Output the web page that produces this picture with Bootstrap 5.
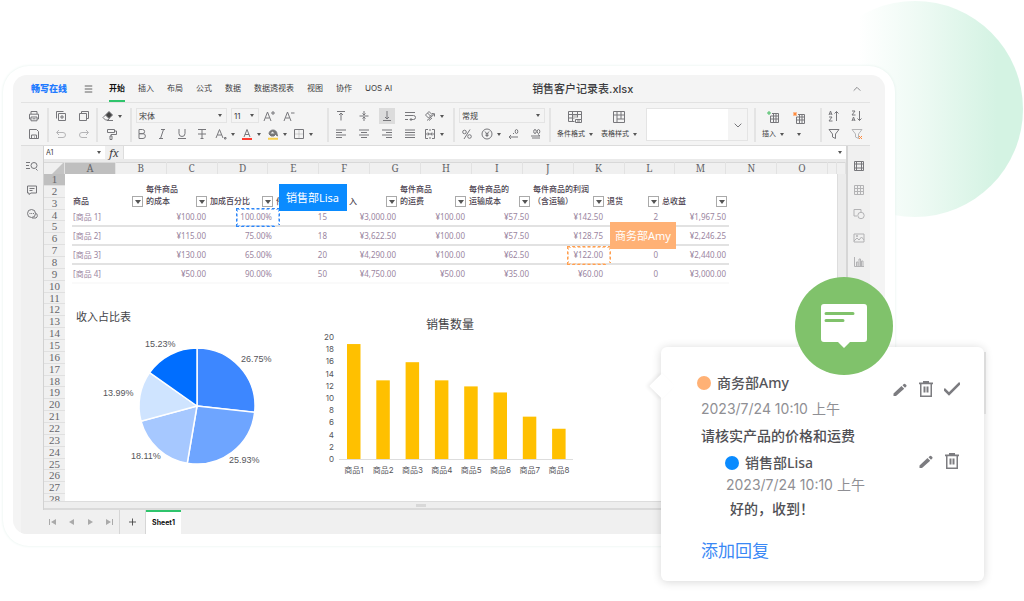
<!DOCTYPE html>
<html lang="zh-CN">
<head>
<meta charset="utf-8">
<meta name="viewport" content="width=device-width, initial-scale=1">
<title>销售客户记录表.xlsx</title>
<link href="https://cdn.jsdelivr.net/npm/bootstrap@5.3.0/dist/css/bootstrap.min.css" rel="stylesheet">
<style>
body{font-family:"Inter","Noto Sans CJK SC",sans-serif;font-size:8px;line-height:12px;color:#3c3c40;background:#fff;overflow-x:hidden}
button,input,select{font:inherit;color:inherit;border:0;padding:0;background:none;border-radius:0;appearance:none}
svg{display:block;flex:none}
.ic{fill:none;stroke:#77777b;stroke-width:1;width:12px;height:12px}
.glow{position:absolute;top:1px;right:1px;width:216px;height:216px;border-radius:50%;background:linear-gradient(90deg,#fff 24%,#eefaf4 52%,#d4f3e3 88%)}
.stage{padding:66px 129px 0 3px;min-height:600px}
.device{background:#fff;border-radius:26px;padding:9px 10px 12px;box-shadow:0 0 3px #e2f0eb}
.screen{background:#f4f4f4;border-radius:14px;padding:0 15px 0 8px;overflow:hidden}
.menubar{height:28px;border-bottom:1px solid #e2e2e2;padding-left:10px}
.brand{font-size:9px;font-weight:900;color:#1f7bff;width:53px;text-decoration:none}
.menu-link{color:#3c3c40;text-decoration:none;margin-right:13px;line-height:27px;white-space:nowrap}
.menu-link.active{font-weight:700;color:#111;box-shadow:inset 0 -2px #2fc46c}
.doc-title{font-size:11px;font-weight:500;margin-left:140px;line-height:16px}
.ribbon{height:43px;padding:5px 0 2px;border-bottom:1px solid #dcdcdc}
.grp{border-right:2px solid #e4e4e4;height:34px}
.grp:last-child{border:0}
.grp>.line{height:18px}
.cap{font-size:7px}
.tb{display:flex;align-items:center;justify-content:center;gap:4px;height:16px}
.w-s{width:20px}.w-m{width:23px}.w-l{width:26px}
.caret{width:0;height:0;border:2px solid transparent;border-top:3px solid #555;border-bottom:0;flex:none}
.on{background:#dcdcdc;width:16px;margin:0 3px 0 4px}
.g1{width:28px}.g2{width:49px}.g3{width:34px}.g4{width:197px}.g5{width:126px}.g6{width:96px}.g7,.g8{padding-left:6px}.g8{width:66px}.g9{width:48px}
.pick{position:relative;border:1px solid #e4e4e4;height:15px}
.pick select,.namebox input{width:100%;height:100%;padding-left:2px;outline:0;display:block;line-height:12px}
.pick .caret,.namebox .caret,.fxbar .caret{position:absolute;right:4px;top:5px}
.pick-font{width:91px}.pick-size{width:28px}.pick-num{width:86px}
.stylebox{width:102px;height:33px;border:1px solid #e4e4e4;background:#fff;margin-right:6px}
.stylebox span{width:19px;background:#f4f4f4}
.railbar{width:22px;background:#f0f0f0;flex:none}
.railbar button{height:24px;display:flex;align-items:center;justify-content:center;width:100%}
.book{border-left:1px solid #d2d2d2;border-right:2px solid #d6d6d6;min-width:0}
.fxrow{height:13px;background:#fff}
.namebox{width:61px;position:relative;font-size:7px}
.fxlabel{width:19px;background:#f0f0f0;font:italic 11px/13px "Noto Serif","Liberation Serif",serif;text-align:center;border-right:1px solid #ddd}
.fxbar{position:relative}.fxbar input{width:100%;height:13px;outline:0;display:block}
.heads{display:grid;grid-template-columns:21px repeat(15,1fr) 9px 9px;height:15px;border-top:3px solid #eaeaea;background:#f0f0f0;font:10px/12px "Noto Serif","Liberation Serif",serif;text-align:center;color:#66666a}
.heads>*{border-right:1px solid #e2e2e2;box-shadow:inset 0 1px #d8d8d8}
.heads .sel,.rows .sel{background:#bfbfbf}
.corner{background:linear-gradient(135deg,transparent 62%,#c4c4c4 63%)}
.sheet{height:327px;overflow:hidden;background:#fff}
.rows{width:21px;height:332px;display:grid;grid-template-rows:repeat(28,minmax(0,1fr));background:#f0f0f0;font:11px/11px "Liberation Serif",serif;text-align:center;color:#66666a;flex:none}
.rows>*{box-shadow:inset 0 -1px #e0e0e0}
.vscroll{width:9px;border-left:1px solid #ddd;background:#ececec;flex:none}
.hscroll{height:9px;background:#eee;border-top:1px solid #ddd;border-bottom:2px solid #dadada}
.hscroll i{width:10px;height:3px;background:#d8d8d8}
.sales{width:657px;table-layout:fixed;margin:9px 0 0 7px;border-collapse:separate;border-spacing:0;font-family:"Noto Sans","Noto Sans CJK SC",sans-serif}
.sales th{height:25px;padding:0 2px 1px 1px;font-weight:500;line-height:12px;color:#4c3f4f;vertical-align:bottom}
.sales th>div{display:flex;justify-content:space-between;align-items:flex-end;white-space:nowrap}
.sales td{position:relative;height:19px;padding:0 3px 0 1px;text-align:right;color:#9b869f;line-height:17px;border-bottom:2px solid #e2e2e2;white-space:nowrap}
.sales td:first-child{text-align:left}
.sales tr:last-child td{border-bottom-color:#fafafa}
.sales th:nth-child(5) span{padding-left:18px}
.flt{width:11px;height:11px;border:1px solid #aaa;background:#fff;flex:none;display:flex;align-items:center;justify-content:center}
.flt::after{content:"";border:3px solid transparent;border-top:4px solid #555;border-bottom:0}
.mark-box{position:absolute;right:-5px;top:0;bottom:-2px;width:44px;border:1px dashed #2f86f5;outline:1px dashed #8fc0ff;outline-offset:-2px}
.amy-box{border-color:#ff9f50;outline-color:#ffc99b}
.tag{position:absolute;z-index:2;left:100%;color:#fff;font-size:11px;line-height:27px;background:#0a8bff;font-family:"Noto Sans","Noto Sans CJK SC",sans-serif}
.tag-lisa{bottom:14px;margin-left:4px;padding:0 8px 0 7px}
.tag-amy{bottom:14px;margin-left:4px;padding:0 5px;background:#ffb175}
.charts{margin-top:16px}
.charts text{font-family:"Inter","Noto Sans CJK SC",sans-serif;fill:#55555a;font-size:8px}
.charts .ttl{font-size:11px;fill:#444448}
.charts .ttl-bar{font-size:12px}
.charts .pct text{font:9px "Liberation Sans",sans-serif}
.tabs{height:24px;background:#f0f0f0;margin:0 -15px 0 0;padding-left:22px}
.tabs .nav-b{width:19px}
.tabs .plus{width:27px;height:100%;border-left:1px solid #d6d6d6;border-right:1px solid #d6d6d6;display:flex;align-items:center;justify-content:center}
.sheet-tab{width:35px;height:24px;background:#fff;border-top:2px solid #2fc46c;font-weight:700;font-size:7px;color:#111}
.note{position:absolute;z-index:5;top:347px;right:40px;width:323px;background:#fff;border-radius:6px;padding:25px 24px 17px 40px;box-shadow:0 1px 10px rgba(0,0,0,.16);color:#55555a;font-size:14px;line-height:22px}
.note::before{content:"";position:absolute;left:-8px;top:30px;width:18px;height:18px;background:#fff;transform:rotate(45deg);box-shadow:-2px 2px 4px rgba(0,0,0,.07)}
.note::after{content:"";position:absolute;right:-2px;top:5px;width:2px;height:62px;background:#dcdcdc}
.note .who{font-weight:500;font-family:"Noto Sans","Noto Sans CJK SC",sans-serif}
.note .when{color:#8f8f94}
.note .body-t{font-weight:500;line-height:32px;color:#505055}
.dot{width:14px;height:14px;border-radius:50%;background:#ffb175;margin:4px 6px 0 -4px}
.dot.blue{background:#0a8bff;margin-left:-1px}
.reply{padding-left:25px}
.reply .body-t{line-height:26px}
.note a{font-size:17px;line-height:26px;color:#3a88f5;text-decoration:none;display:inline-block;margin-top:16px}
.tools{gap:10px}
.tools svg{width:16px;height:18px;fill:#7c7c80}
.badge-c{position:absolute;z-index:6;top:277px;right:131px;width:98px;height:98px;border-radius:50%;background:#80c26b}
</style>
</head>
<body>
<svg width="0" height="0" class="position-absolute" aria-hidden="true">
<symbol id="print" viewBox="0 0 12 12"><path d="M3 4V1.5h6V4M3 9H1.5V4.2h9V9H9M3 7h6v3.8H3zM4.5 8.8h3"/></symbol>
<symbol id="save" viewBox="0 0 12 12"><path d="M1.5 1.5h7l2 2v7h-9zM3.5 10.500V7h5v3.500M6 9h1"/></symbol>
<symbol id="addcopy" viewBox="0 0 12 12"><path d="M3.500 3.500h7v7h-7zM1.500 8.500v-7h7M7 5v4M5 7h4"/></symbol>
<symbol id="copy" viewBox="0 0 12 12"><path d="M1.500 3.500h7v7h-7zM3.500 3V1.500h7v7H9"/></symbol>
<symbol id="undo" viewBox="0 0 12 12"><path d="M4 2 1.500 4.500 4 7M2 4.500h6a2.500 2.500 0 0 1 0 5H3"/></symbol>
<symbol id="redo" viewBox="0 0 12 12"><path d="M8 2l2.500 2.500L8 7M10 4.500H4a2.500 2.500 0 0 0 0 5h5"/></symbol>
<symbol id="eraser" viewBox="0 0 12 12"><path d="M7 1.500 10.500 5 7 8.500 3.500 5z" fill="#444"/><path d="M3.500 5 1 7.500 3.500 10H6l1.500-1.500M5 10.500h6"/></symbol>
<symbol id="paint" viewBox="0 0 12 12"><path d="M1.500 1.500h7v3h-7zM8.500 3h2v3.500H5V8M4 8h2v3.500H4z"/></symbol>
<symbol id="bold" viewBox="0 0 12 12"><path d="M3 1.500h3.500a2 2 0 0 1 0 4.200H3zM3 5.700h4a2.300 2.300 0 0 1 0 4.800H3z"/></symbol>
<symbol id="ital" viewBox="0 0 12 12"><path d="M5 1.500h4M3 10.500h4M7.500 1.500l-3 9"/></symbol>
<symbol id="under" viewBox="0 0 12 12"><path d="M3 1v4.500a3 3 0 0 0 6 0V1M2 10.500h8"/></symbol>
<symbol id="strike" viewBox="0 0 12 12"><path d="M2 1.500h8M6 1.500v9M2 6h8M4.500 10.500h3"/></symbol>
<symbol id="border" viewBox="0 0 12 12"><path d="M1.500 1.500h9v9h-9z"/><path d="M6 2v8M2 6h8" stroke-opacity=".3"/></symbol>
<symbol id="fill" viewBox="0 0 12 12"><path d="M2 6c0-2.500 2-4 4-4s4 1.500 4 4l.5 2-2-1.500L7 8H4z" fill="#777"/><path d="M3.500 5.500h4L5.500 3.500z" fill="#eee" stroke="none"/><path d="M1 10.800h10" stroke="#fad04c" stroke-width="2"/></symbol>
<symbol id="vt" viewBox="0 0 12 12"><path d="M2 1.500h8M6 10.500V3M4 5l2-2 2 2"/></symbol>
<symbol id="vm" viewBox="0 0 12 12"><path d="M1.500 6h9M6 1v4M6 11V7M4.500 3.500 6 5l1.500-1.500M4.500 8.500 6 7l1.500 1.500"/></symbol>
<symbol id="vb" viewBox="0 0 12 12"><path d="M2 10.500h8M6 1v8M4 7l2 2 2-2"/></symbol>
<symbol id="wrap" viewBox="0 0 12 12"><path d="M1 2.500h10M1 5.500h8.500a2 2 0 0 1 0 4H6M7.500 8 6 9.500 7.500 11M1 9.500h3"/></symbol>
<symbol id="rot" viewBox="0 0 12 12"><path d="M1.500 5 5 1.500 8 4.500 4.500 8zM3.500 3l3 3M3 10.500 10.500 4M8 3.500l2.500.3v2.700M5 10.500 8 8"/></symbol>
<symbol id="al" viewBox="0 0 12 12"><path d="M1 2h10M1 4.500h6M1 7h10M1 9.500h6"/></symbol>
<symbol id="ac" viewBox="0 0 12 12"><path d="M1 2h10M3 4.500h6M1 7h10M3 9.500h6"/></symbol>
<symbol id="ar" viewBox="0 0 12 12"><path d="M1 2h10M5 4.500h6M1 7h10M5 9.500h6"/></symbol>
<symbol id="aj" viewBox="0 0 12 12"><path d="M1 2h10M1 4.500h10M1 7h10M1 9.500h10"/></symbol>
<symbol id="merge" viewBox="0 0 12 12"><path d="M4 1.500H1.500v9H4M8 1.500h2.500v9H8M6 1v2M6 9v2M2 6h8M4 4.500 5 6 4 7.500M8 4.500 7 6l1 1.500"/></symbol>
<symbol id="yen" viewBox="0 0 12 12"><circle cx="6" cy="6" r="5"/><path d="M4 3.500 6 6l2-2.500M6 6v3M4.500 6h3M4.500 7.500h3"/></symbol>
<symbol id="sheetgrid" viewBox="0 0 12 12"><path d="M1.500 1.500h9v9h-9zM1.500 4.500h9M1.500 7.500h9M4.500 1.500v9M7.500 1.500v9"/></symbol>
<symbol id="cond" viewBox="0 0 16 14"><path d="M1.500 1.500h13v8M1.500 1.500v10h6M1.500 4.500h13M1.500 8h6M5.500 1.500v10M10.500 1.500v6"/><path d="M6 5h4v3H6z" fill="#ccc" stroke="none"/><path d="M8.500 9.500h6v3h-6zM10 11h3"/></symbol>
<symbol id="tstyle" viewBox="0 0 14 14"><path d="M1.500 1.500h11v11h-11zM1.500 5h11M5 1.500v11M9 1.500v7.500M5 9h7"/></symbol>
<symbol id="gplus" viewBox="0 0 14 14"><path d="M6 3.500h6.500v9h-8V6M4.500 9h8M4.500 6h8M7.500 3.500v9M10 3.500v9"/><path d="M1 3h4M3 1v4" stroke="#46bd62"/></symbol>
<symbol id="gdel" viewBox="0 0 14 14"><path d="M6 3.500h6.500v9h-8V6M4.500 9h8M4.500 6h8M7.500 3.500v9M10 3.500v9"/><path d="M1.500 1.500l3 3M4.500 1.500l-3 3" stroke="#ff8a3c" stroke-width="1.500"/></symbol>
<symbol id="funnel" viewBox="0 0 12 12"><path d="M1 1.500h10L7.500 6v4.500L4.500 9V6z"/></symbol>
<symbol id="up" viewBox="0 0 12 12"><path d="M1 5 2.500 1 4 5M1.500 4h2M1 7h3L1 11h3.500M8.500 11V1.500M6.500 3.500l2-2 2 2"/></symbol>
<symbol id="down" viewBox="0 0 12 12"><path d="M1 1h3L1 5h3.500M1 11l1.500-4L4 11M1.500 10h2M8.500 1v9.500M6.500 8.500l2 2 2-2"/></symbol>
<symbol id="find" viewBox="0 0 12 12"><path d="M0 2.500h4M0 5.500h3M0 8.500h4M10 9l1.500 1.500"/><circle cx="8" cy="5.500" r="3"/></symbol>
<symbol id="note" viewBox="0 0 12 12"><path d="M1.500 2h9v7H5l-2 1.500V9H1.500zM3.500 4.500h5M3.500 6.500h3"/></symbol>
<symbol id="chat" viewBox="0 0 12 12"><circle cx="5.500" cy="5.500" r="4"/><path d="M9.500 5a2.800 2.800 0 0 1 .5 5H6M3.500 5.500h1M5.200 5.500h1M7 5.500h1"/></symbol>
<symbol id="panel" viewBox="0 0 12 12"><path d="M1.500 1.500h9v9h-9zM3.500 1.500v9M8.500 1.500v9M1.500 4h9M1.500 8h9"/></symbol>
<symbol id="shape" viewBox="0 0 12 12"><path d="M4 8H1V1.500h7V4"/><circle cx="8" cy="7.500" r="3.200"/></symbol>
<symbol id="pic" viewBox="0 0 12 12"><path d="M1 2h10v8H1zM1 9l3-3 2 2 2.500-3L11 8"/><circle cx="4" cy="4" r=".7"/></symbol>
<symbol id="chart" viewBox="0 0 12 12"><path d="M1.500 1v9.500H11M3.500 10V6h1.500v4M6 10V3h1.500v7M8.500 10V5H10v5"/></symbol>
<symbol id="pencil" viewBox="0 0 16 18"><path d="M1.500 16v-2.500L9.500 6l2.700 2.700L4 16zM10.500 5.200l1.400-1.300q.6-.5 1.200 0l1.200 1.200q.6.600 0 1.300L13 7.800z"/></symbol>
<symbol id="trash" viewBox="0 0 16 18"><path fill-rule="evenodd" d="M5 2.500V1h6v1.500h4v1.700h-1V17H2V4.200H1V2.500zM3.500 4.200v11.300h9V4.200zM5.500 6.500h2v6h-2zm3 0h2v6h-2z"/></symbol>
</svg>

<div class="position-relative">
<div class="glow"></div>
<div class="stage position-relative">
<main class="device">
<div class="screen">
  <header class="menubar d-flex align-items-center">
    <a href="#" class="brand">畅写在线</a>
    <button aria-label="菜单" class="me-3"><svg class="ic" viewBox="0 0 12 12" style="width:9px"><path d="M1 2h10M1 6h10M1 10h10" stroke="#333"/></svg></button>
    <nav class="d-flex">
      <a href="#" class="menu-link active">开始</a><a href="#" class="menu-link">插入</a><a href="#" class="menu-link">布局</a><a href="#" class="menu-link">公式</a><a href="#" class="menu-link">数据</a><a href="#" class="menu-link">数据透视表</a><a href="#" class="menu-link">视图</a><a href="#" class="menu-link">协作</a><a href="#" class="menu-link me-0">UOS AI</a>
    </nav>
    <h1 class="doc-title mb-0 me-auto">销售客户记录表.xlsx</h1>
    <button aria-label="收起" class="me-2"><svg class="ic" viewBox="0 0 12 12" style="width:10px"><path d="M2 8l4-4 4 4"/></svg></button>
  </header>

  <div class="ribbon d-flex">
    <div class="grp g1">
      <div class="line d-flex justify-content-center"><button class="tb" aria-label="打印"><svg class="ic"><use href="#print"/></svg></button></div>
      <div class="line d-flex justify-content-center"><button class="tb" aria-label="保存"><svg class="ic"><use href="#save"/></svg></button></div>
    </div>
    <div class="grp g2">
      <div class="line d-flex"><button class="tb w-m" aria-label="粘贴"><svg class="ic"><use href="#addcopy"/></svg></button><button class="tb w-m" aria-label="复制"><svg class="ic"><use href="#copy"/></svg></button></div>
      <div class="line d-flex opacity-50"><button class="tb w-m" aria-label="撤销"><svg class="ic"><use href="#undo"/></svg></button><button class="tb w-m" aria-label="重做"><svg class="ic"><use href="#redo"/></svg></button></div>
    </div>
    <div class="grp g3">
      <div class="line d-flex ps-1"><button class="tb w-s" aria-label="清除"><svg class="ic"><use href="#eraser"/></svg><i class="caret"></i></button></div>
      <div class="line d-flex ps-1"><button class="tb w-s" aria-label="格式刷"><svg class="ic"><use href="#paint"/></svg></button></div>
    </div>
    <div class="grp g4">
      <div class="line d-flex ps-1">
        <div class="pick pick-font me-1"><select aria-label="字体"><option>宋体</option></select><i class="caret"></i></div>
        <div class="pick pick-size"><select aria-label="字号"><option>11</option></select><i class="caret"></i></div>
        <button class="tb w-s" aria-label="增大字号"><svg class="ic"><path d="M1 11 4.500 2 8 11M2.500 8h4M8 3h4M10 1v4"/></svg></button><button class="tb w-s" aria-label="减小字号"><svg class="ic"><path d="M1 11 4.500 2 8 11M2.500 8h4M8 3h3.500"/></svg></button>
      </div>
      <div class="line d-flex"><button class="tb w-s" aria-label="加粗"><svg class="ic"><use href="#bold"/></svg></button><button class="tb w-s" aria-label="斜体"><svg class="ic"><use href="#ital"/></svg></button><button class="tb w-s" aria-label="下划线"><svg class="ic"><use href="#under"/></svg></button><button class="tb w-s" aria-label="删除线"><svg class="ic"><use href="#strike"/></svg></button><button class="tb w-l" aria-label="下标"><svg class="ic"><path d="M1 10 4.500 1.500 8 10M2.500 7h4M9.500 9.500h1.500v1.500H9.500z"/></svg><i class="caret"></i></button><button class="tb w-l" aria-label="字体颜色"><svg class="ic"><path d="M3 9 6 1.500 9 9M4 6.500h4"/><path d="M1 11h10" stroke="#ff3b30" stroke-width="2"/></svg><i class="caret"></i></button><button class="tb w-l" aria-label="填充颜色"><svg class="ic"><use href="#fill"/></svg><i class="caret"></i></button><button class="tb w-l" aria-label="边框"><svg class="ic"><use href="#border"/></svg><i class="caret"></i></button></div>
    </div>
    <div class="grp g5">
      <div class="line d-flex"><button class="tb w-m" aria-label="顶端对齐"><svg class="ic"><use href="#vt"/></svg></button><button class="tb w-m" aria-label="垂直居中"><svg class="ic"><use href="#vm"/></svg></button><button class="tb on" aria-label="底端对齐"><svg class="ic"><use href="#vb"/></svg></button><button class="tb w-m" aria-label="自动换行"><svg class="ic"><use href="#wrap"/></svg></button><button class="tb w-l" aria-label="方向"><svg class="ic"><use href="#rot"/></svg><i class="caret"></i></button></div>
      <div class="line d-flex"><button class="tb w-m" aria-label="左对齐"><svg class="ic"><use href="#al"/></svg></button><button class="tb w-m" aria-label="居中"><svg class="ic"><use href="#ac"/></svg></button><button class="tb w-m" aria-label="右对齐"><svg class="ic"><use href="#ar"/></svg></button><button class="tb w-m" aria-label="两端对齐"><svg class="ic"><use href="#aj"/></svg></button><button class="tb w-l" aria-label="合并"><svg class="ic"><use href="#merge"/></svg><i class="caret"></i></button></div>
    </div>
    <div class="grp g6">
      <div class="line ps-1"><div class="pick pick-num"><select aria-label="数字格式"><option>常规</option></select><i class="caret"></i></div></div>
      <div class="line d-flex"><button class="tb w-m" aria-label="百分比"><svg class="ic"><circle cx="3.500" cy="4" r="1.800"/><circle cx="8.500" cy="8.500" r="1.800"/><path d="M9 1.500 3 11"/></svg></button><button class="tb w-l" aria-label="货币"><svg class="ic"><use href="#yen"/></svg><i class="caret"></i></button><button class="tb w-s" aria-label="减少小数"><svg class="ic"><ellipse cx="8.500" cy="3.500" rx="1.300" ry="2"/><path d="M1 9h9M3 7 1 9l2 2M5 5.500h1"/></svg></button><button class="tb w-m" aria-label="增加小数"><svg class="ic"><ellipse cx="5" cy="3.500" rx="1.300" ry="2"/><ellipse cx="8.500" cy="3.500" rx="1.300" ry="2"/><path d="M1 8h9M8 6.500l2 1.500M2 10h8"/></svg></button></div>
    </div>
    <div class="grp g7 flex-fill d-flex">
      <button class="text-nowrap"><svg class="ic mx-auto" style="width:16px;height:14px"><use href="#cond"/></svg><span class="cap d-flex align-items-center gap-1 mt-1">条件格式 <i class="caret"></i></span></button>
      <button class="text-nowrap ms-2"><svg class="ic mx-auto" style="width:14px;height:14px"><use href="#tstyle"/></svg><span class="cap d-flex align-items-center gap-1 mt-1">表格样式 <i class="caret"></i></span></button>
      <button class="stylebox d-flex justify-content-end ms-auto" aria-label="样式"><span class="h-100 d-flex align-items-center justify-content-center"><svg class="ic" style="width:8px" viewBox="0 0 12 12"><path d="M1 4l5 5 5-5" stroke-width="1.500"/></svg></span></button>
    </div>
    <div class="grp g8 d-flex gap-2">
      <button class="text-nowrap"><svg class="ic mx-auto" style="width:14px;height:14px"><use href="#gplus"/></svg><span class="cap d-flex align-items-center gap-1 mt-1">插入 <i class="caret"></i></span></button>
      <button aria-label="删除"><svg class="ic" style="width:14px;height:14px"><use href="#gdel"/></svg><span class="cap d-flex justify-content-center py-1 mt-1"><i class="caret"></i></span></button>
    </div>
    <div class="grp g9">
      <div class="line d-flex"><button class="tb w-m" aria-label="升序"><svg class="ic"><use href="#up"/></svg></button><button class="tb w-m" aria-label="降序"><svg class="ic"><use href="#down"/></svg></button></div>
      <div class="line d-flex"><button class="tb w-m" aria-label="筛选"><svg class="ic"><use href="#funnel"/></svg></button><button class="tb w-m" aria-label="清除筛选"><svg class="ic"><g opacity=".5"><use href="#funnel"/></g><path d="M8 8l3 3M11 8l-3 3" stroke="#ff8a3c"/></svg></button></div>
    </div>
  </div>

  <div class="d-flex">
    <aside class="railbar pt-2">
      <button aria-label="查找"><svg class="ic"><use href="#find"/></svg></button><button aria-label="批注"><svg class="ic"><use href="#note"/></svg></button><button aria-label="聊天"><svg class="ic"><use href="#chat"/></svg></button>
    </aside>
    <section class="book flex-fill">
      <div class="fxrow d-flex">
        <div class="namebox"><input aria-label="名称框" value="A1"><i class="caret"></i></div>
        <div class="fxlabel">fx</div>
        <div class="fxbar flex-fill"><input aria-label="编辑栏"><i class="caret"></i></div>
      </div>
      <div class="heads" id="heads"></div>
      <div class="sheet d-flex">
        <div class="rows" id="rows"></div>
        <div class="flex-fill">
          <table class="sales">
            <colgroup><col style="width:73px"><col style="width:64px"><col style="width:66px"><col style="width:55px"><col style="width:69px"><col style="width:69px"><col style="width:64px"><col style="width:74px"><col style="width:55px"><col style="width:68px"></colgroup>
            <thead><tr id="thead"></tr></thead>
            <tbody id="tbody"></tbody>
          </table>
          <div class="charts d-flex">
            <svg width="255" height="185" viewBox="65 300 255 185" role="img" aria-label="收入占比表">
              <text class="ttl" x="76" y="321">收入占比表</text>
              <g id="pie" stroke="#fff" stroke-width="1.500"></g>
              <g class="pct"><text x="241" y="362">26.75%</text><text x="229" y="463">25.93%</text><text x="131" y="459">18.11%</text><text x="103" y="396">13.99%</text><text x="145" y="347">15.23%</text></g>
            </svg>
            <svg width="260" height="185" viewBox="320 300 260 185" role="img" aria-label="销售数量">
              <text class="ttl ttl-bar" x="450" y="329" text-anchor="middle">销售数量</text>
              <path d="M339 459.500h234" stroke="#ddd"/>
              <g id="bars"></g>
            </svg>
          </div>
        </div>
        <div class="vscroll"></div>
      </div>
      <div class="hscroll d-flex align-items-center justify-content-center pe-5"><i></i></div>
    </section>
    <aside class="railbar pt-2">
      <button aria-label="面板"><svg class="ic"><use href="#panel"/></svg></button><button aria-label="表格"><svg class="ic opacity-50"><use href="#sheetgrid"/></svg></button><button aria-label="形状"><svg class="ic opacity-50"><use href="#shape"/></svg></button><button aria-label="图片"><svg class="ic opacity-50"><use href="#pic"/></svg></button><button aria-label="图表"><svg class="ic opacity-50"><use href="#chart"/></svg></button>
    </aside>
  </div>

  <footer class="tabs d-flex align-items-center">
    <button class="nav-b" aria-label="第一张"><svg class="mx-auto" width="7" height="6" fill="#aaa"><path d="M0 0h1v6H0zM7 0v6L2 3z"/></svg></button><button class="nav-b" aria-label="上一张"><svg class="mx-auto" width="5" height="6" fill="#aaa"><path d="M5 0v6L0 3z"/></svg></button><button class="nav-b" aria-label="下一张"><svg class="mx-auto" width="5" height="6" fill="#aaa"><path d="M0 0v6l5-3z"/></svg></button><button class="nav-b" aria-label="最后一张"><svg class="mx-auto" width="7" height="6" fill="#aaa"><path d="M6 0h1v6H6zM0 0v6l5-3z"/></svg></button>
    <button class="plus" aria-label="新建工作表"><svg class="ic" style="width:7px" viewBox="0 0 8 8"><path d="M4 0v8M0 4h8" stroke="#444"/></svg></button>
    <button class="sheet-tab">Sheet1</button>
  </footer>
</div>
</main>
</div>

<div class="badge-c d-flex align-items-center justify-content-center">
  <svg width="46" height="44" viewBox="0 0 46 44"><path fill="#fff" d="M3 0h40a3 3 0 0 1 3 3v32a3 3 0 0 1-3 3H29l-6 6-6-6H3a3 3 0 0 1-3-3V3a3 3 0 0 1 3-3z"/><path d="M5 9.500h27M5 16.500h17" stroke="#80c26b" stroke-width="3" stroke-linecap="round"/></svg>
</div>
<section class="note">
  <div class="d-flex align-items-start"><i class="dot"></i><span class="who">商务部Amy</span>
    <div class="tools d-flex ms-auto pt-2"><button aria-label="编辑"><svg><use href="#pencil"/></svg></button><button aria-label="删除"><svg><use href="#trash"/></svg></button><button aria-label="解决"><svg viewBox="0 0 16 18"><path d="M0 9l5 5L16 3" fill="none" stroke="#7c7c80" stroke-width="2.500"/></svg></button></div>
  </div>
  <div class="when">2023/7/24 10:10 上午</div>
  <div class="body-t">请核实产品的价格和运费</div>
  <div class="reply">
    <div class="d-flex align-items-start"><i class="dot blue"></i><span class="who">销售部Lisa</span>
      <div class="tools d-flex ms-auto"><button aria-label="编辑"><svg><use href="#pencil"/></svg></button><button aria-label="删除"><svg><use href="#trash"/></svg></button></div>
    </div>
    <div class="when">2023/7/24 10:10 上午</div>
    <div class="body-t ps-1">好的，收到！</div>
  </div>
  <a href="#">添加回复</a>
</section>
</div>

<script>
const $ = id => document.getElementById(id);
$('heads').innerHTML = '<span class="corner"></span>' + [...'ABCDEFGHIJKLMNO'].map((c, i) => `<span class="${i ? '' : 'sel'}">${c}</span>`).join('') + '<span></span><span></span>';
$('rows').innerHTML = Array.from({length: 28}, (_, i) => `<span class="${i ? '' : 'sel'}">${i + 1}</span>`).join('');
const heads = ['商品', '每件商品<br>的成本', '加成百分比', '件', '入', '每件商品<br>的运费', '每件商品的<br>运输成本', '每件商品的利润<br>（含运输）', '退货', '总收益'];
$('thead').innerHTML = heads.map(h => `<th><div><span>${h}</span><button class="flt" aria-label="筛选"></button></div></th>`).join('');
const data = [
  ['[商品 1]', '¥100.00', '100.00%', '15', '¥3,000.00', '¥100.00', '¥57.50', '¥142.50', '2', '¥1,967.50'],
  ['[商品 2]', '¥115.00', '75.00%', '18', '¥3,622.50', '¥100.00', '¥57.50', '¥128.75', '', '¥2,246.25'],
  ['[商品 3]', '¥130.00', '65.00%', '20', '¥4,290.00', '¥100.00', '¥62.50', '¥122.00', '0', '¥2,440.00'],
  ['[商品 4]', '¥50.00', '90.00%', '50', '¥4,750.00', '¥50.00', '¥35.00', '¥60.00', '0', '¥3,000.00']];
const extra = {'0,2': '<i class="mark-box"></i><span class="tag tag-lisa">销售部Lisa</span>', '2,7': '<i class="mark-box amy-box"></i><span class="tag tag-amy">商务部Amy</span>'};
$('tbody').innerHTML = data.map((r, y) => '<tr>' + r.map((v, x) => `<td>${v}${extra[y + ',' + x] || ''}</td>`).join('') + '</tr>').join('');

const slices = [[26.75, '#3d87ff'], [25.93, '#6ea5ff'], [18.11, '#a6c8ff'], [13.99, '#cfe4ff'], [15.23, '#006eff']];
let at = 0;
const pt = p => { const a = p / 100 * 2 * Math.PI; return (197 + 58 * Math.sin(a)) + ' ' + (406 - 58 * Math.cos(a)); };
$('pie').innerHTML = slices.map(([p, c]) => { const s = at; at += p; return `<path fill="${c}" d="M197 406L${pt(s)}A58 58 0 0 1 ${pt(at)}z"/>`; }).join('');

const qty = [19, 13, 16, 13, 12, 11, 7, 5];
let out = '';
for (let v = 0; v <= 20; v += 2) out += `<text x="334" y="${462 - v * 6.1}" text-anchor="end">${v}</text>`;
qty.forEach((v, i) => {
  const x = 347 + i * 29.3, h = v * 6.05;
  out += `<rect x="${x}" y="${459 - h}" width="13.500" height="${h}" fill="#ffc000"/><text x="${x + 7}" y="473" text-anchor="middle">商品${i + 1}</text>`;
});
$('bars').innerHTML = out;
</script>
<script src="https://cdn.jsdelivr.net/npm/bootstrap@5.3.0/dist/js/bootstrap.bundle.min.js"></script>
</body>
</html>
